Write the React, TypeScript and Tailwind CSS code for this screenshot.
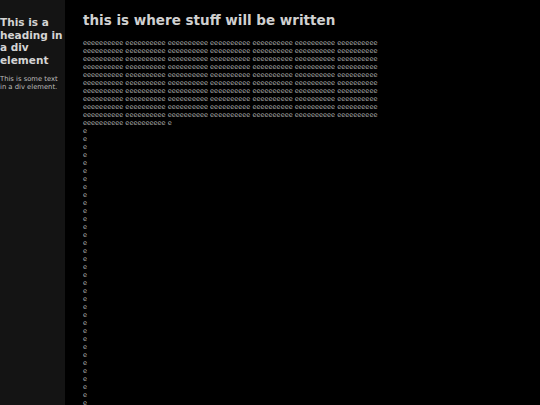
import React from 'react';

const groups = Array.from({ length: 72 }, () => 'eeeeeeeeee').join(' ') + ' e';
const singles = Array.from({ length: 35 }, (_, i) => i);

export default function App() {
  return (
    <div
      className="flex h-screen overflow-hidden bg-black text-[#cfcfcf]"
      style={{ fontFamily: '"DejaVu Sans", Verdana, sans-serif' }}
    >
      {/* Sidebar */}
      <div className="w-[65px] shrink-0 bg-[#141414]">
        <h2 className="mt-[16px] text-[10.5px] font-bold leading-[12.6px] text-[#d4d4d4]">
          This is a heading in a div element
        </h2>
        <p className="mt-[9px] text-[6.8px] leading-[8px] text-[#bdbdbd]">
          This is some text in a div element.
        </p>
      </div>

      {/* Main */}
      <div className="flex-1 pl-[18px]">
        <h1 className="mt-[12px] text-[13.5px] font-bold leading-[16px] text-[#d0d0d0]">
          this is where stuff will be written
        </h1>
        <div className="mt-[11px] w-[320px] text-[6.55px] leading-[8px] text-[#b0b0b0]">
          <div>{groups}</div>
          {singles.map((i) => (
            <div key={i}>e</div>
          ))}
        </div>
      </div>
    </div>
  );
}
